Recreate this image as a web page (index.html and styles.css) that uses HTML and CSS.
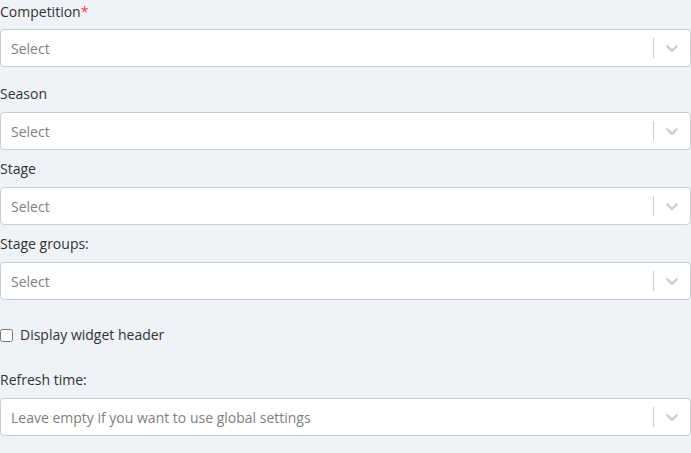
FILE: index.html
```html
<!DOCTYPE html>
<html>
<head>
    <title>Widget Settings</title>
    <link rel="stylesheet" href="styles.css">
</head>
<body>
    <div class="settings">
        <div class="form-group form-group-first">
            <label>Competition<span class="required">*</span></label>
            <div class="select">
                <div class="select-value">Select</div>
                <div class="select-indicators">
                    <span class="select-separator"></span>
                    <span class="select-arrow">
                        <svg viewBox="0 0 20 20" width="20" height="20"><path d="M4.516 7.548c0.436-0.446 1.043-0.481 1.576 0l3.908 3.747 3.908-3.747c0.533-0.481 1.141-0.446 1.574 0 0.436 0.445 0.408 1.197 0 1.615-0.406 0.418-4.695 4.502-4.695 4.502-0.217 0.223-0.502 0.335-0.787 0.335s-0.57-0.112-0.789-0.335c0 0-4.287-4.084-4.695-4.502s-0.436-1.17 0-1.615z"></path></svg>
                    </span>
                </div>
            </div>
        </div>
        <div class="form-group">
            <label>Season</label>
            <div class="select">
                <div class="select-value">Select</div>
                <div class="select-indicators">
                    <span class="select-separator"></span>
                    <span class="select-arrow">
                        <svg viewBox="0 0 20 20" width="20" height="20"><path d="M4.516 7.548c0.436-0.446 1.043-0.481 1.576 0l3.908 3.747 3.908-3.747c0.533-0.481 1.141-0.446 1.574 0 0.436 0.445 0.408 1.197 0 1.615-0.406 0.418-4.695 4.502-4.695 4.502-0.217 0.223-0.502 0.335-0.787 0.335s-0.57-0.112-0.789-0.335c0 0-4.287-4.084-4.695-4.502s-0.436-1.17 0-1.615z"></path></svg>
                    </span>
                </div>
            </div>
        </div>
        <div class="form-group">
            <label>Stage</label>
            <div class="select">
                <div class="select-value">Select</div>
                <div class="select-indicators">
                    <span class="select-separator"></span>
                    <span class="select-arrow">
                        <svg viewBox="0 0 20 20" width="20" height="20"><path d="M4.516 7.548c0.436-0.446 1.043-0.481 1.576 0l3.908 3.747 3.908-3.747c0.533-0.481 1.141-0.446 1.574 0 0.436 0.445 0.408 1.197 0 1.615-0.406 0.418-4.695 4.502-4.695 4.502-0.217 0.223-0.502 0.335-0.787 0.335s-0.57-0.112-0.789-0.335c0 0-4.287-4.084-4.695-4.502s-0.436-1.17 0-1.615z"></path></svg>
                    </span>
                </div>
            </div>
        </div>
        <div class="form-group">
            <label>Stage groups:</label>
            <div class="select">
                <div class="select-value">Select</div>
                <div class="select-indicators">
                    <span class="select-separator"></span>
                    <span class="select-arrow">
                        <svg viewBox="0 0 20 20" width="20" height="20"><path d="M4.516 7.548c0.436-0.446 1.043-0.481 1.576 0l3.908 3.747 3.908-3.747c0.533-0.481 1.141-0.446 1.574 0 0.436 0.445 0.408 1.197 0 1.615-0.406 0.418-4.695 4.502-4.695 4.502-0.217 0.223-0.502 0.335-0.787 0.335s-0.57-0.112-0.789-0.335c0 0-4.287-4.084-4.695-4.502s-0.436-1.17 0-1.615z"></path></svg>
                    </span>
                </div>
            </div>
        </div>
        <label class="checkbox-row">
            <input type="checkbox">
            <span>Display widget header</span>
        </label>
        <div class="form-group">
            <label>Refresh time:</label>
            <div class="select">
                <div class="select-value">Leave empty if you want to use global settings</div>
                <div class="select-indicators">
                    <span class="select-separator"></span>
                    <span class="select-arrow">
                        <svg viewBox="0 0 20 20" width="20" height="20"><path d="M4.516 7.548c0.436-0.446 1.043-0.481 1.576 0l3.908 3.747 3.908-3.747c0.533-0.481 1.141-0.446 1.574 0 0.436 0.445 0.408 1.197 0 1.615-0.406 0.418-4.695 4.502-4.695 4.502-0.217 0.223-0.502 0.335-0.787 0.335s-0.57-0.112-0.789-0.335c0 0-4.287-4.084-4.695-4.502s-0.436-1.17 0-1.615z"></path></svg>
                    </span>
                </div>
            </div>
        </div>
    </div>
</body>
</html>
```

FILE: styles.css
```css
body {
    margin: 0;
    background: #eff2f6;
    font-family: "Open Sans", "Liberation Sans", sans-serif;
    font-size: 14px;
    line-height: 20px;
    color: #333;
}
.settings {
    padding-top: 2px;
}
.form-group {
    margin-bottom: 9px;
}
.form-group label {
    display: block;
    margin-bottom: 8px;
}
.form-group-first {
    margin-bottom: 17px;
}
.form-group-first label {
    margin-bottom: 7px;
}
.required {
    color: #f0443a;
}
.select {
    display: flex;
    align-items: center;
    box-sizing: border-box;
    min-height: 38px;
    background: #fff;
    border: 1px solid #ccc;
    border-radius: 4px;
}
.select-value {
    flex: 1;
    padding: 3px 10px 1px;
    color: #808080;
}
.select-indicators {
    display: flex;
    align-self: stretch;
    align-items: center;
}
.select-separator {
    align-self: stretch;
    width: 1px;
    margin: 8px 0;
    background: #ccc;
}
.select-arrow {
    display: flex;
    padding: 8px;
}
.select-arrow svg {
    fill: #ccc;
}
.checkbox-row {
    display: flex;
    align-items: center;
    margin: 25px 0 25px;
}
.checkbox-row input {
    width: 13px;
    height: 13px;
    margin: 0 7px 0 0;
}
```
